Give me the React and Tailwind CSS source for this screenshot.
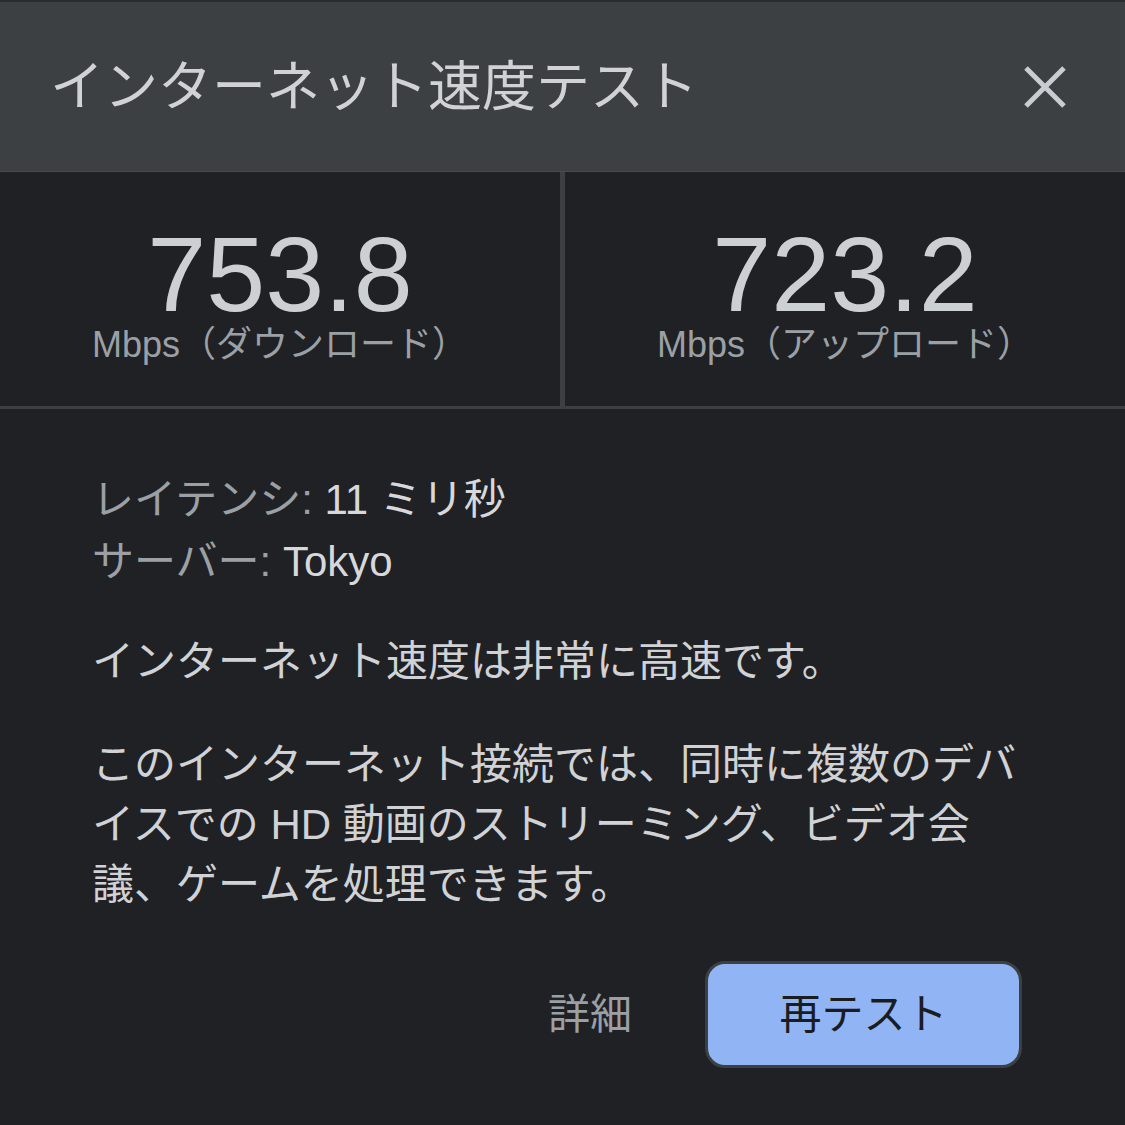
import React from 'react';

const font = { fontFamily: '"Liberation Sans", "Noto Sans CJK JP", sans-serif' };

function Stat({ value, label }) {
  return (
    <div className="flex-1 flex flex-col items-center pt-[46px]">
      <div className="text-[106px] leading-[112px] text-[#cdd0d3]">{value}</div>
      <div className="text-[36px] leading-[30px] text-[#9aa0a6]">{label}</div>
    </div>
  );
}

export default function App() {
  return (
    <div className="w-[1125px] h-[1125px] bg-[#202124] overflow-hidden" style={font}>
      <div className="h-[2px] bg-[#2a2b2e]" />

      {/* header */}
      <div className="h-[170px] bg-[#3c4043] border-b border-[#474a4e] flex items-center justify-between pl-[50px] pr-[58px]">
        <h1 className="text-[54px] leading-none text-[#d0d2d5]">インターネット速度テスト</h1>
        <button className="w-[44px] h-[44px] flex items-center justify-center">
          <svg width="44" height="44" viewBox="0 0 44 44" fill="none" stroke="#c9ccd0" strokeWidth="5">
            <path d="M3 3 L41 41 M41 3 L3 41" />
          </svg>
        </button>
      </div>

      {/* results */}
      <div className="flex h-[237px] border-b-[3px] border-[#3c4043]">
        <Stat value="753.8" label="Mbps（ダウンロード）" />
        <div className="w-[5px] bg-[#3c4043]" />
        <Stat value="723.2" label="Mbps（アップロード）" />
      </div>

      {/* details */}
      <div className="pl-[92px] pr-[103px] pt-[60px]">
        <div className="text-[42px] leading-[62px]">
          <div>
            <span className="text-[#9aa0a6]">レイテンシ: </span>
            <span className="text-[#d6d8db]">11 ミリ秒</span>
          </div>
          <div>
            <span className="text-[#9aa0a6]">サーバー: </span>
            <span className="text-[#d6d8db]">Tokyo</span>
          </div>
        </div>

        <p className="mt-[39px] text-[42px] leading-[60px] text-[#d0d2d5]">インターネット速度は非常に高速です。</p>

        <p className="mt-[43px] text-[42px] leading-[60px] text-[#d0d2d5] whitespace-nowrap">
          このインターネット接続では、同時に複数のデバ<br />
          イスでの HD 動画のストリーミング、ビデオ会<br />
          議、ゲームを処理できます。
        </p>

        <div className="mt-[46px] flex items-center justify-end gap-[73px]">
          <button className="text-[42px] leading-none text-[#9aa0a6]">詳細</button>
          <button className="w-[317px] h-[107px] rounded-[20px] border-[3px] border-[#3c4043] bg-[#91b4f4] text-[42px] leading-none text-[#1b1c1e]">
            再テスト
          </button>
        </div>
      </div>
    </div>
  );
}
